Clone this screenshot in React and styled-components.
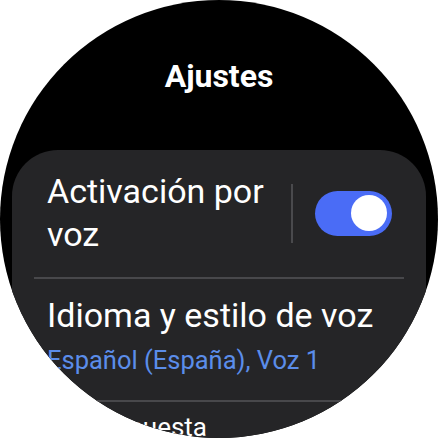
import React from 'react';
import styled, { createGlobalStyle } from 'styled-components';

const GlobalStyle = createGlobalStyle`
  html, body {
    margin: 0;
    padding: 0;
    background: #fff;
  }
  body {
    font-family: Roboto, "Noto Sans", sans-serif;
  }
`;

const Screen = styled.div`
  width: 438px;
  height: 438px;
  border-radius: 50%;
  overflow: hidden;
  background: #000;
  color: #fff;
  display: flex;
  flex-direction: column;
`;

const Header = styled.h1`
  margin: 0;
  padding-top: 58px;
  font-size: 32px;
  font-weight: 700;
  line-height: 36px;
  text-align: center;
`;

const Card = styled.div`
  flex: 1;
  margin: 56px 12px 0;
  background: #252527;
  border-radius: 46px 46px 0 0;
  display: flex;
  flex-direction: column;
`;

const Row = styled.div`
  display: flex;
  align-items: center;
  padding: ${p => p.pad};
`;

const TextCol = styled.div`
  flex: 1;
  display: flex;
  flex-direction: column;
`;

const Label = styled.div`
  font-size: ${p => p.size || 34}px;
  line-height: ${p => p.lh || 43}px;
  color: #fff;
  max-width: ${p => p.maxW || 'none'};
`;

const Sub = styled.div`
  font-size: 25.5px;
  line-height: 30px;
  color: #5b8dea;
  margin-top: 8px;
  white-space: nowrap;
`;

const Divider = styled.div`
  height: 2px;
  margin: 0 22px;
  background: #48484b;
`;

const VLine = styled.div`
  width: 2px;
  height: 59px;
  background: #4a4a4d;
  margin: 0 22px 0 0;
`;

const Track = styled.div`
  width: 77px;
  height: 45px;
  border-radius: 23px;
  background: ${p => (p.on ? '#4a6cf6' : '#5a5a5e')};
  display: flex;
  align-items: center;
  justify-content: ${p => (p.on ? 'flex-end' : 'flex-start')};
  padding: 0 5px;
  box-sizing: border-box;
`;

const Knob = styled.div`
  width: 36px;
  height: 36px;
  border-radius: 50%;
  background: #fff;
`;

function Toggle({ on }) {
  return (
    <Track on={on}>
      <Knob />
    </Track>
  );
}

export default function App() {
  return (
    <>
      <GlobalStyle />
      <Screen>
        <Header>Ajustes</Header>
        <Card>
          <Row pad="20px 34px 21px 35px">
            <TextCol>
              <Label maxW="230px">Activación por voz</Label>
            </TextCol>
            <VLine />
            <Toggle on />
          </Row>
          <Divider />
          <Row pad="15px 34px 25px 35px">
            <TextCol>
              <Label>Idioma y estilo de voz</Label>
              <Sub>Español (España), Voz 1</Sub>
            </TextCol>
          </Row>
          <Divider />
          <Row pad="10px 34px 0 73px">
            <Label size={26} lh={31}>Respuesta</Label>
          </Row>
        </Card>
      </Screen>
    </>
  );
}
